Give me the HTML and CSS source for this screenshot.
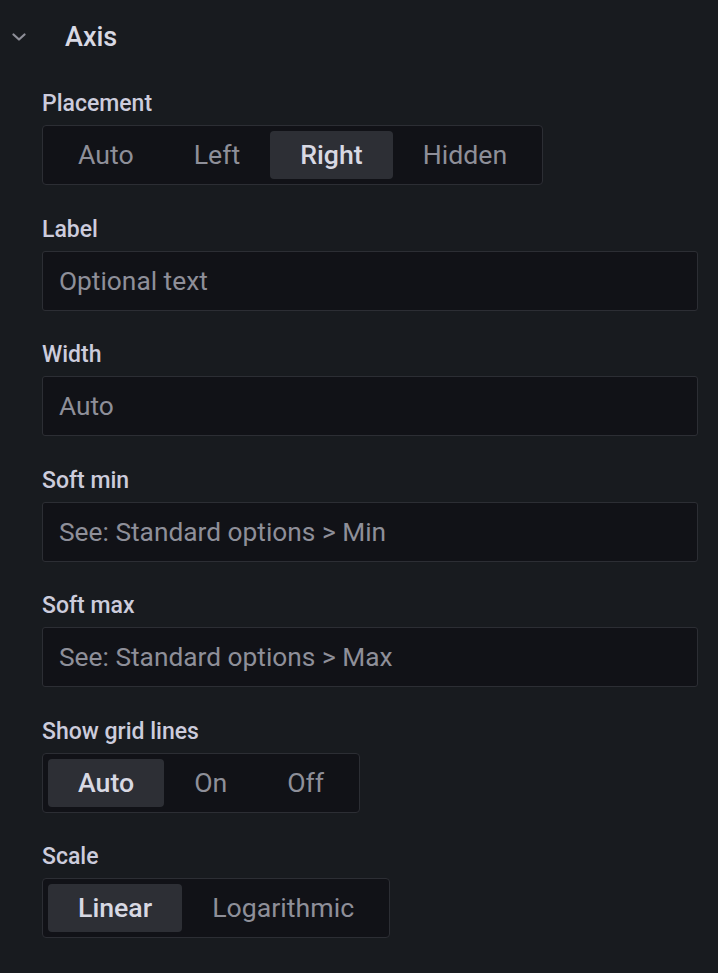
FILE: index.html
```html
<!DOCTYPE html>
<html lang="en">
<head>
<meta charset="utf-8">
<title>Axis</title>
<link rel="stylesheet" href="styles.css">
</head>
<body>
<div class="section">
  <div class="section-header">
    <svg class="chevron" width="14" height="8" viewBox="0 0 14 8"><path d="M1.5 1.5 L7 6.5 L12.5 1.5" fill="none" stroke="#8e8f98" stroke-width="2.2" stroke-linecap="round" stroke-linejoin="round"/></svg>
    <span class="section-title">Axis</span>
  </div>
  <div class="section-body">
    <div class="field">
      <div class="field-label">Placement</div>
      <div class="radio-group">
        <span class="radio">Auto</span>
        <span class="radio">Left</span>
        <span class="radio active">Right</span>
        <span class="radio">Hidden</span>
      </div>
    </div>
    <div class="field">
      <div class="field-label">Label</div>
      <div class="input"><span class="placeholder">Optional text</span></div>
    </div>
    <div class="field">
      <div class="field-label">Width</div>
      <div class="input"><span class="placeholder">Auto</span></div>
    </div>
    <div class="field">
      <div class="field-label">Soft min</div>
      <div class="input"><span class="placeholder">See: Standard options &gt; Min</span></div>
    </div>
    <div class="field">
      <div class="field-label">Soft max</div>
      <div class="input"><span class="placeholder">See: Standard options &gt; Max</span></div>
    </div>
    <div class="field">
      <div class="field-label">Show grid lines</div>
      <div class="radio-group">
        <span class="radio active">Auto</span>
        <span class="radio">On</span>
        <span class="radio">Off</span>
      </div>
    </div>
    <div class="field">
      <div class="field-label">Scale</div>
      <div class="radio-group">
        <span class="radio active">Linear</span>
        <span class="radio">Logarithmic</span>
      </div>
    </div>
  </div>
</div>
</body>
</html>
```

FILE: styles.css
```css
html, body {
  margin: 0;
  padding: 0;
  background: #181b1f;
  font-family: Roboto, "Liberation Sans", sans-serif;
  color: #ccccdc;
}

.section {
  width: 718px;
  height: 973px;
  box-sizing: border-box;
}

.section-header {
  height: 74px;
  display: flex;
  align-items: center;
  box-sizing: border-box;
  padding-left: 12px;
}

.chevron {
  display: block;
  margin-right: 39px;
}

.section-title {
  font-size: 27px;
  line-height: 30px;
  font-weight: 500;
  color: #d8d9e3;
}

.section-body {
  padding: 15px 20px 0 42px;
}

.field {
  margin-bottom: 29.5px;
}

.field-label {
  font-size: 23px;
  line-height: 30px;
  font-weight: 500;
  color: #ccccdc;
  margin-bottom: 6px;
}

.radio-group {
  display: inline-flex;
  align-items: center;
  box-sizing: border-box;
  height: 60px;
  padding: 0 5px;
  border: 1px solid #2c2e34;
  border-radius: 4px;
  background: #111217;
}

.radio {
  display: flex;
  align-items: center;
  height: 48px;
  padding: 0 30px;
  font-size: 26.7px;
  color: #8e8f99;
  border-radius: 4px;
}

.radio.active {
  background: #2d2f35;
  color: #d8d9e3;
  font-weight: 500;
}

.input {
  display: flex;
  align-items: center;
  box-sizing: border-box;
  height: 60px;
  padding-left: 16px;
  border: 1px solid #2c2e34;
  border-radius: 3px;
  background: #111217;
}

.placeholder {
  font-size: 26.3px;
  color: #8e8f99;
}
```
